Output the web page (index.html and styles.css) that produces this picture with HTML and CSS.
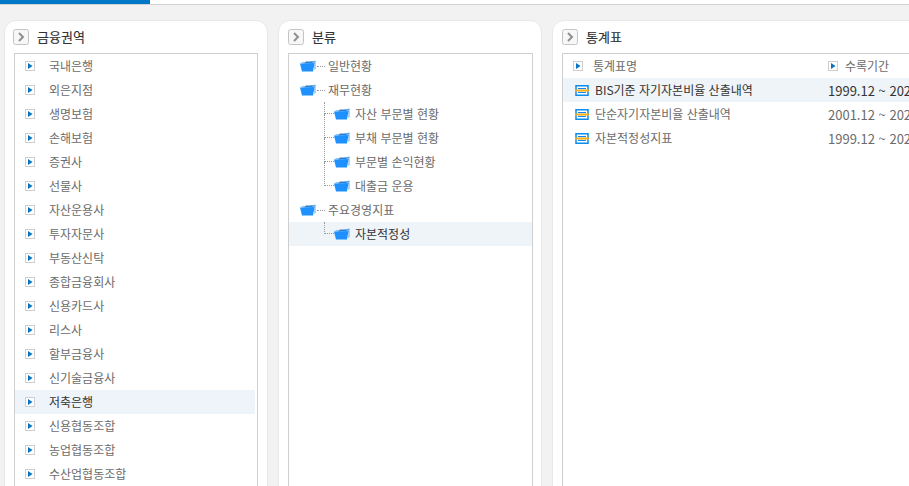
FILE: index.html
```html
<!DOCTYPE html>
<html lang="ko">
<head>
<meta charset="utf-8">
<title>통계표</title>
<link rel="stylesheet" href="styles.css">
</head>
<body>
<svg class="defs" width="0" height="0" aria-hidden="true">
  <symbol id="bullet" viewBox="0 0 10 10">
    <rect x="0.5" y="0.5" width="9" height="9" fill="#fff" stroke="#cfcfcf"/>
    <path d="M3 2 L7.5 5 L3 8 Z" fill="#0a74c4"/>
  </symbol>
  <symbol id="folder" viewBox="0 0 16 12">
    <path d="M11 1.5 L15.5 0.5 L15.5 9 L14.5 10 L14.5 2.5 L11 3 Z" fill="#5aa6e8"/>
    <path d="M0.5 2.5 L5 2.5 L6 1.5 L12.5 1.5 L12.5 3 L5 3.5 Z" fill="#2a7fd6"/>
    <path d="M0 3.5 L14.5 3 L13 11.5 L2 11.5 Z" fill="#1e90ff"/>
  </symbol>
  <symbol id="table" viewBox="0 0 14 11">
    <rect x="1" y="0.75" width="12" height="9.5" fill="#fff" stroke="#0d8aee" stroke-width="1.5"/>
    <rect x="3" y="3" width="8" height="1" fill="#0d8aee"/>
    <rect x="3" y="7" width="8" height="1" fill="#0d8aee"/>
    <rect x="0" y="4.5" width="14" height="2" fill="#f9a912"/>
  </symbol>
  <symbol id="chevron" viewBox="0 0 16 16">
    <rect x="0.5" y="0.5" width="15" height="15" rx="2" fill="#f7f7f7" stroke="#c4c4c4"/>
    <path d="M6 4 L10 8 L6 12" fill="none" stroke="#8f8f8f" stroke-width="2"/>
  </symbol>
</svg>

<div class="topbar"><div class="progress"></div></div>

<main class="panels">
  <section class="panel">
    <h2 class="panel-title"><svg class="chev"><use href="#chevron"/></svg>금융권역</h2>
    <ul class="box list">
      <li class="row"><svg class="bullet"><use href="#bullet"/></svg>국내은행</li>
      <li class="row"><svg class="bullet"><use href="#bullet"/></svg>외은지점</li>
      <li class="row"><svg class="bullet"><use href="#bullet"/></svg>생명보험</li>
      <li class="row"><svg class="bullet"><use href="#bullet"/></svg>손해보험</li>
      <li class="row"><svg class="bullet"><use href="#bullet"/></svg>증권사</li>
      <li class="row"><svg class="bullet"><use href="#bullet"/></svg>선물사</li>
      <li class="row"><svg class="bullet"><use href="#bullet"/></svg>자산운용사</li>
      <li class="row"><svg class="bullet"><use href="#bullet"/></svg>투자자문사</li>
      <li class="row"><svg class="bullet"><use href="#bullet"/></svg>부동산신탁</li>
      <li class="row"><svg class="bullet"><use href="#bullet"/></svg>종합금융회사</li>
      <li class="row"><svg class="bullet"><use href="#bullet"/></svg>신용카드사</li>
      <li class="row"><svg class="bullet"><use href="#bullet"/></svg>리스사</li>
      <li class="row"><svg class="bullet"><use href="#bullet"/></svg>할부금융사</li>
      <li class="row"><svg class="bullet"><use href="#bullet"/></svg>신기술금융사</li>
      <li class="row selected"><svg class="bullet"><use href="#bullet"/></svg>저축은행</li>
      <li class="row"><svg class="bullet"><use href="#bullet"/></svg>신용협동조합</li>
      <li class="row"><svg class="bullet"><use href="#bullet"/></svg>농업협동조합</li>
      <li class="row"><svg class="bullet"><use href="#bullet"/></svg>수산업협동조합</li>
    </ul>
  </section>

  <section class="panel">
    <h2 class="panel-title"><svg class="chev"><use href="#chevron"/></svg>분류</h2>
    <ul class="box tree">
      <li class="node"><svg class="folder"><use href="#folder"/></svg><span class="dots"></span>일반현황</li>
      <li class="node"><svg class="folder"><use href="#folder"/></svg><span class="dots"></span>재무현황</li>
      <li class="node child first"><span class="elbow"></span><svg class="folder"><use href="#folder"/></svg>자산 부문별 현황</li>
      <li class="node child"><span class="elbow"></span><svg class="folder"><use href="#folder"/></svg>부채 부문별 현황</li>
      <li class="node child"><span class="elbow"></span><svg class="folder"><use href="#folder"/></svg>부문별 손익현황</li>
      <li class="node child"><span class="elbow"></span><svg class="folder"><use href="#folder"/></svg>대출금 운용</li>
      <li class="node"><svg class="folder"><use href="#folder"/></svg><span class="dots"></span>주요경영지표</li>
      <li class="node child first current"><span class="elbow"></span><svg class="folder"><use href="#folder"/></svg>자본적정성</li>
    </ul>
  </section>

  <section class="panel panel-wide">
    <h2 class="panel-title"><svg class="chev"><use href="#chevron"/></svg>통계표</h2>
    <div class="box stats">
      <div class="stat head">
        <span class="stat-name"><svg class="bullet"><use href="#bullet"/></svg>통계표명</span>
        <span class="stat-period"><svg class="bullet"><use href="#bullet"/></svg>수록기간</span>
      </div>
      <div class="stat current">
        <span class="stat-name"><svg class="table"><use href="#table"/></svg>BIS기준 자기자본비율 산출내역</span>
        <span class="stat-period">1999.12 ~ 2023.12</span>
      </div>
      <div class="stat">
        <span class="stat-name"><svg class="table"><use href="#table"/></svg>단순자기자본비율 산출내역</span>
        <span class="stat-period">2001.12 ~ 2023.12</span>
      </div>
      <div class="stat">
        <span class="stat-name"><svg class="table"><use href="#table"/></svg>자본적정성지표</span>
        <span class="stat-period">1999.12 ~ 2023.12</span>
      </div>
    </div>
  </section>
</main>
</body>
</html>
```

FILE: styles.css
```css
* { box-sizing: border-box; }
html, body { margin: 0; height: 100%; overflow: hidden; }
body {
  background: #f2f2f2;
  font-family: "Noto Sans CJK KR", "Noto Sans", sans-serif;
  font-size: 12px;
  color: #6b6b6b;
}
.defs { position: absolute; }
.topbar { height: 5px; background: #fff; border-bottom: 1px solid #d4d4d4; }
.progress { width: 150px; height: 4px; background: #0078c8; }
.panels { display: flex; gap: 10px; padding: 15px 0 0 4px; align-items: flex-start; }
.panel {
  flex: 0 0 264px;
  height: 480px;
  padding: 0 9px;
  background: #fff;
  border: 1px solid #e8e8e8;
  border-radius: 12px 12px 0 0;
}
.panel-wide { flex: 0 0 400px; }
.panel-title {
  display: flex;
  align-items: center;
  gap: 8px;
  height: 32px;
  margin: 0;
  padding-bottom: 1px;
  font-size: 13px;
  font-weight: 400;
  color: #333;
  -webkit-text-stroke: 0.15px #333;
}
.chev { width: 16px; height: 16px; flex: none; margin-top: 1px; }
.panel:first-child .chev { margin-left: -1px; }
.box {
  height: 440px;
  margin: 0;
  padding: 0;
  list-style: none;
  background: #fff;
  border: 1px solid #cfcfcf;
}
.tree { margin-right: -1px; }
.row {
  display: flex;
  align-items: center;
  height: 24px;
  margin-right: 2px;
  padding: 0 0 2px 10px;
}
.row .bullet { margin-right: 14px; }
.bullet { width: 10px; height: 10px; flex: none; margin-top: 2px; }
.selected { background: #eff3fa; color: #333; }

.node {
  display: flex;
  align-items: center;
  position: relative;
  height: 24px;
  padding: 0 0 2px 11px;
}
.folder { width: 16px; height: 12px; flex: none; margin-top: 2px; }
.dots { width: 8px; margin: 2px 3px 0 1px; border-top: 1px dotted #999; }
.child { padding-left: 36px; }
.child .folder { margin: 2px 5px 0 9px; }
.elbow {
  position: absolute;
  left: 35px;
  top: -12px;
  width: 10px;
  height: 24px;
  border-left: 1px dotted #999;
  border-bottom: 1px dotted #999;
}
.child.first .elbow { top: 0; height: 12px; }
.current { background: #eff4f8; color: #333; }

.stat { display: flex; align-items: center; height: 24px; padding-bottom: 2px; }
.stat-name { display: flex; align-items: center; width: 265px; flex: none; padding-left: 12px; white-space: nowrap; }
.stat-period { display: flex; align-items: center; padding-top: 2px; white-space: nowrap; font-size: 13px; }
.stat .table { width: 14px; height: 11px; flex: none; margin: 2px 6px 0 0; }
.head .stat-name .bullet { margin: 2px 10px 0 -2px; }
.head .stat-period { padding-top: 0; font-size: 12px; }
.head .stat-period .bullet { margin-right: 7px; }
```
